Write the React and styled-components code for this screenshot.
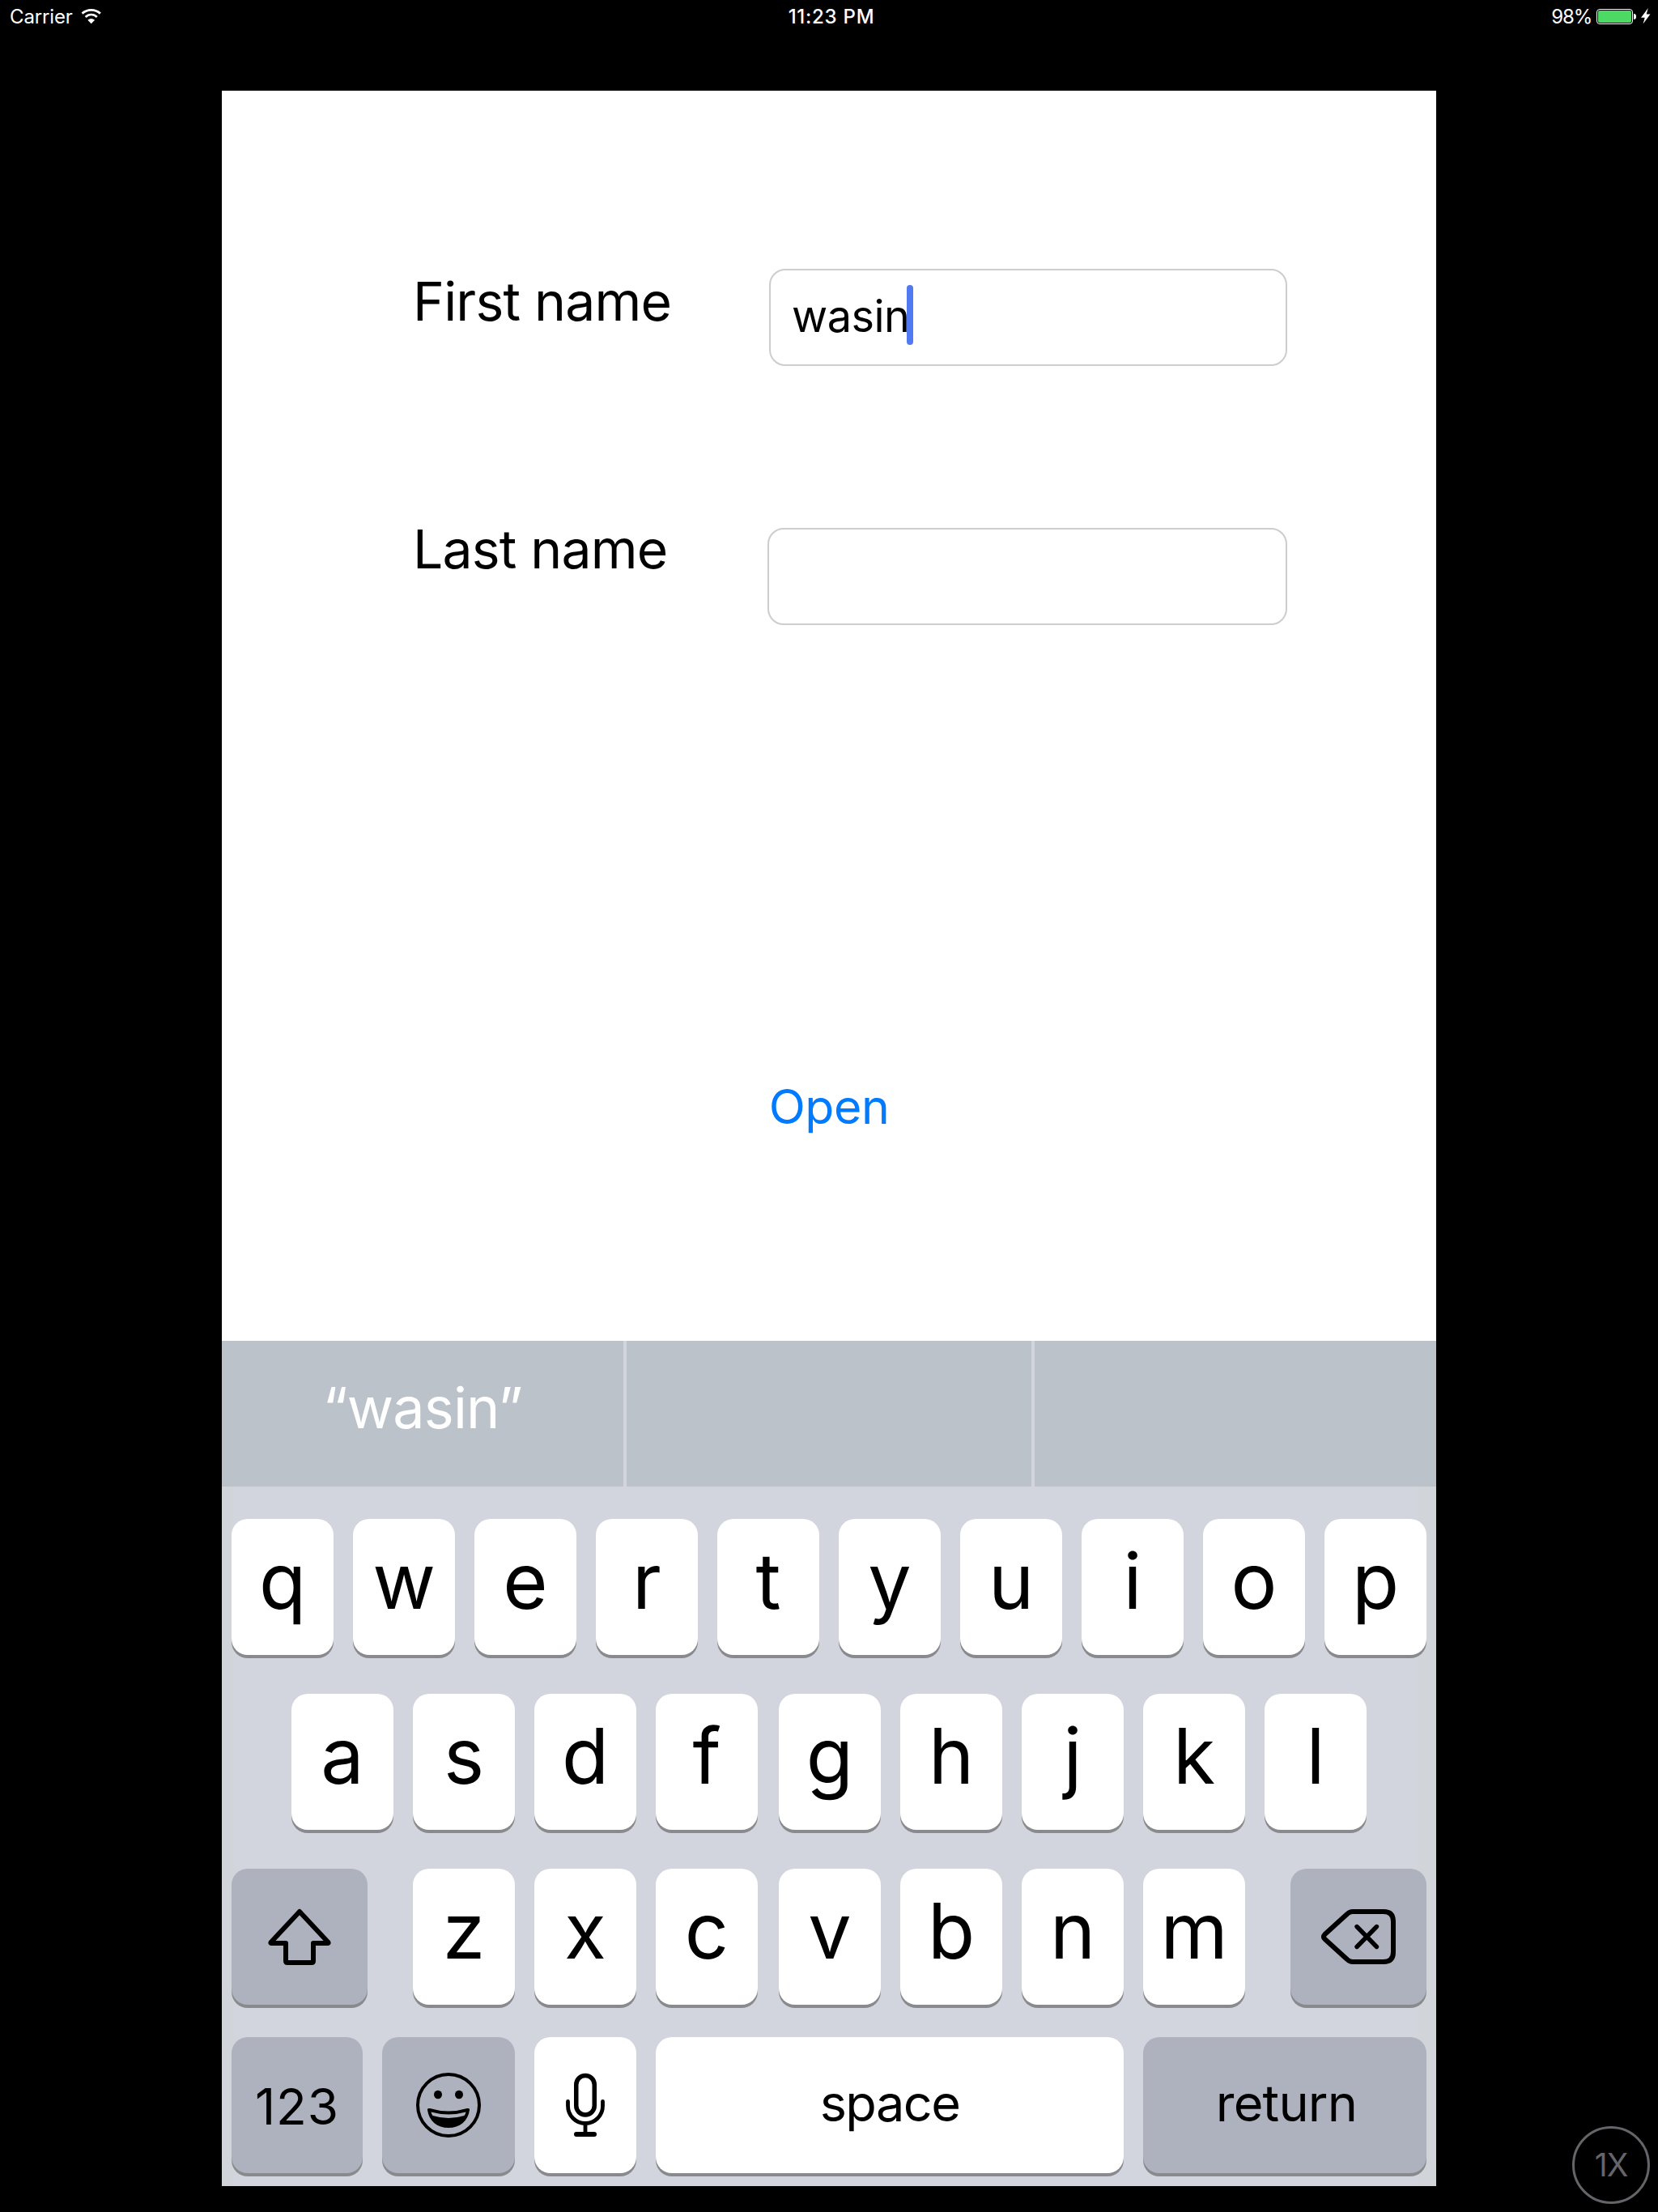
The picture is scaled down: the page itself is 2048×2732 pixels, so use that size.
import React from 'react';
import styled, { createGlobalStyle } from 'styled-components';

const GlobalStyle = createGlobalStyle`
  *, *::before, *::after { box-sizing: border-box; }
  html, body { margin: 0; padding: 0; background: #000; }
  body { font-family: Inter, Roboto, "Liberation Sans", sans-serif; }
`;

const Screen = styled.main`
  position: relative;
  display: flex;
  flex-direction: column;
  align-items: center;
  width: 2048px;
  height: 2732px;
  background: #000;
  overflow: hidden;
`;

const StatusBar = styled.header`
  display: grid;
  grid-template-columns: 1fr auto 1fr;
  align-items: start;
  width: 100%;
  height: 112px;
  padding: 0 9px 0 12px;
  color: #fff;
  font-size: 24px;
  line-height: 41px;
  white-space: nowrap;
`;

const StatusGroup = styled.div`
  display: flex;
  align-items: flex-start;
  justify-content: ${(p) => (p.$end ? 'flex-end' : 'flex-start')};
`;

const StatusText = styled.span`
  letter-spacing: ${(p) => p.$track || 0}px;
`;

const Clock = styled.time`
  padding-left: 3px;
  font-weight: 500;
  letter-spacing: 0.75px;
`;

const Wifi = styled.svg`
  width: 26px;
  height: 20px;
  margin: 10px 0 0 10px;
`;

const Battery = styled.div`
  width: 45px;
  height: 19px;
  margin: 11px 0 0 6px;
  padding: 1px;
  border: 1px solid #fff;
  border-radius: 4px;
`;

const Charge = styled.div`
  height: 100%;
  border-radius: 2px;
  background: #4cd964;
`;

const BatteryTip = styled.div`
  width: 3px;
  height: 7px;
  margin: 17px 0 0 1px;
  border-radius: 0 3px 3px 0;
  background: #fff;
`;

const Bolt = styled.svg`
  width: 12px;
  height: 20px;
  margin: 10px 0 0 6px;
`;

const Phone = styled.section`
  display: flex;
  flex-direction: column;
  width: 1500px;
  height: 2588px;
  background: #fff;
`;

const Form = styled.div`
  display: flex;
  flex-direction: column;
  height: 1544px;
  padding-top: 220px;
`;

const Field = styled.div`
  display: flex;
  justify-content: space-between;
  align-items: flex-start;
  height: 120px;
  margin-bottom: ${(p) => p.$after}px;
  padding: 0 184px 0 236px;
`;

const Label = styled.label`
  font-size: 66px;
  line-height: ${(p) => p.$line}px;
  letter-spacing: -0.8px;
  white-space: nowrap;
  color: #000;
`;

const TextBox = styled.div`
  display: flex;
  align-items: flex-start;
  width: ${(p) => p.$width}px;
  height: 120px;
  padding: 18px 0 0 26px;
  border: 2px solid #cdcdcd;
  border-radius: 20px;
  background: #fff;
  font-size: 54px;
  line-height: 77px;
  color: #000;
`;

const Typed = styled.span`
  letter-spacing: -0.5px;
`;

const Caret = styled.span`
  width: 8px;
  height: 74px;
  margin-left: -4px;
  border-radius: 4px;
  background: #5079f2;
`;

const OpenButton = styled.button`
  align-self: center;
  padding: 0;
  border: 0;
  background: none;
  font: inherit;
  font-size: 59px;
  line-height: 69px;
  letter-spacing: -0.5px;
  color: #007aff;
`;

const Suggestions = styled.div`
  display: grid;
  grid-template-columns: 496px 500px 496px;
  gap: 4px;
  height: 180px;
  background: #d2d5dd;
`;

const Suggestion = styled.div`
  background: #bbc2ca;
  color: #fff;
  font-size: 70px;
  line-height: 165px;
  letter-spacing: -0.8px;
  text-align: center;
`;

const Keyboard = styled.div`
  display: flex;
  flex-direction: column;
  height: 864px;
  padding: 40px 12px 0;
  background: linear-gradient(to right, #d1d4d8 12px, #d2d5dd 16px, #d2d5dd 1474px, #d1d4d8 1480px);
`;

const KeyRow = styled.div`
  display: flex;
  justify-content: space-between;
  height: 168px;
  margin-bottom: ${(p) => p.$after || 0}px;
  padding: 0 ${(p) => p.$inset || 0}px;
`;

const KeyGroup = styled.div`
  display: flex;
  gap: ${(p) => p.$gap || 24}px;
`;

const Key = styled.button`
  display: flex;
  justify-content: center;
  align-items: ${(p) => (p.$icon ? 'center' : 'flex-start')};
  flex: none;
  width: ${(p) => p.$width || 126}px;
  height: 168px;
  padding: 0 0 0 ${(p) => p.$nudge || 0}px;
  border: 0;
  border-radius: 20px;
  background: ${(p) => (p.$dark ? '#aeb2be' : '#fff')};
  box-shadow: 0 4px 0 #898a8d;
  font: inherit;
  font-size: ${(p) => p.$size || 95}px;
  line-height: ${(p) => p.$line || 153}px;
  letter-spacing: ${(p) => p.$track || 0}px;
  color: #000;
`;

const Glyph = styled.svg`
  display: block;
  width: ${(p) => p.$w}px;
  height: ${(p) => p.$h}px;
  fill: none;
  stroke: #000;
  stroke-linecap: round;
  stroke-linejoin: round;
`;

const ZoomBadge = styled.div`
  position: absolute;
  right: 10px;
  bottom: 10px;
  width: 96px;
  height: 96px;
  border: 3px solid #656569;
  border-radius: 50%;
  color: #656569;
  font-size: 39px;
  letter-spacing: -1px;
  line-height: 90px;
  text-align: center;
`;

const Letters = ({ of }) => (
  <KeyGroup>
    {[...of].map((c) => <Key key={c}>{c}</Key>)}
  </KeyGroup>
);

const ShiftIcon = () => (
  <Glyph $w={80} $h={72} viewBox="330 2355 80 72" strokeWidth="6">
    <path d="M370 2360 L334.5 2398 Q334 2399 335 2399 H353 V2421 Q353 2423 355 2423 H385 Q387 2423 387 2421 V2399 H405 Q406 2399 405.5 2398 Z" />
  </Glyph>
);

const DeleteIcon = () => (
  <Glyph $w={92} $h={68} viewBox="1632 2358 92 68" strokeWidth="6">
    <path d="M1671 2361 H1709 Q1721 2361 1721 2373 V2411 Q1721 2423 1709 2423 H1671 Q1667 2423 1664 2420 L1636.500 2395 Q1633.500 2392 1636.500 2389 L1664 2364 Q1667 2361 1671 2361 Z" />
    <path strokeWidth="5.4" d="M1676 2379.500 L1700.500 2404.500 M1700.500 2379.500 L1676 2404.500" />
  </Glyph>
);

const EmojiIcon = () => (
  <Glyph $w={80} $h={80} viewBox="514 2560 80 80" strokeWidth="4">
    <circle cx="554" cy="2600" r="38" />
    <g stroke="none">
      <ellipse cx="541" cy="2587" rx="5" ry="5.3" fill="#000" />
      <ellipse cx="567" cy="2587" rx="5" ry="5.3" fill="#000" />
      <path fill="#000" d="M528 2606 Q527.500 2603.500 531 2604 Q554 2611 577 2604 Q580.500 2603.500 580 2606 C578 2620 568 2628 554 2628 C540 2628 530 2620 528 2606 Z" />
      <path fill="#aeb2be" d="M532.500 2608.500 Q554 2614.500 575.500 2608.500 Q575 2611 573.500 2613 Q554 2619 534.500 2613 Q533 2611 532.500 2608.500 Z" />
    </g>
  </Glyph>
);

const MicIcon = () => (
  <Glyph $w={50} $h={80} viewBox="699 2561 50 80" strokeWidth="5.5">
    <rect x="712.75" y="2564.5" width="22.5" height="48.5" rx="11.25" />
    <path strokeWidth="4.8" d="M702.500 2596.500 V2602 A21.500 21.500 0 0 0 745.500 2602 V2596.500 M724 2624 V2637" />
    <path strokeWidth="6" d="M713 2637 H735" />
  </Glyph>
);

export default function App() {
  return (
    <Screen>
      <GlobalStyle />
      <StatusBar>
        <StatusGroup>
          <StatusText $track={-0.15}>Carrier</StatusText>
          <Wifi viewBox="100 10 26 20" fill="none" stroke="#fff">
            <path strokeWidth="2.8" d="M101.500 16.600 A17 17 0 0 1 123.900 16.600" />
            <path strokeWidth="2.6" d="M105.600 21 A10 10 0 0 1 119.800 21" />
            <path fill="#fff" stroke="none" d="M108.300 24.800 Q112.700 21 117.100 24.800 L112.700 29.200 Z" />
          </Wifi>
        </StatusGroup>
        <Clock>11:23 PM</Clock>
        <StatusGroup $end>
          <StatusText $track={-1.2}>98%</StatusText>
          <Battery>
            <Charge />
          </Battery>
          <BatteryTip />
          <Bolt viewBox="0 0 12 20" fill="#fff">
            <path d="M8.800 0 L0 11.700 H4.700 L2.600 19.500 L11.500 7.500 H6.700 Z" />
          </Bolt>
        </StatusGroup>
      </StatusBar>

      <Phone>
        <Form>
          <Field $after={200}>
            <Label $line={80}>First name</Label>
            <TextBox $width={640}>
              <Typed>wasin</Typed>
              <Caret />
            </TextBox>
          </Field>
          <Field $after={560}>
            <Label $line={52}>Last name</Label>
            <TextBox $width={642} />
          </Field>
          <OpenButton>Open</OpenButton>
        </Form>

        <Suggestions>
          <Suggestion>“wasin”</Suggestion>
          <Suggestion />
          <Suggestion />
        </Suggestions>

        <Keyboard>
          <KeyRow $after={48}>
            <Letters of="qwertyuiop" />
          </KeyRow>
          <KeyRow $after={48} $inset={74}>
            <Letters of="asdf" />
            <Letters of="ghjkl" />
          </KeyRow>
          <KeyRow $after={40}>
            <Key $dark $icon $width={168} aria-label="shift"><ShiftIcon /></Key>
            <KeyGroup $gap={26}>
              <Letters of="zxc" />
              <Letters of="vbnm" />
            </KeyGroup>
            <Key $dark $icon $width={168} aria-label="delete"><DeleteIcon /></Key>
          </KeyRow>
          <KeyRow>
            <Key $dark $width={162} $size={62} $line={171} $track={0.9}>123</Key>
            <Key $dark $icon $width={164} aria-label="emoji"><EmojiIcon /></Key>
            <Key $icon aria-label="dictate"><MicIcon /></Key>
            <Key $width={578} $size={63} $line={162} $track={-1.6}>space</Key>
            <Key $dark $width={350} $size={63} $line={162} $track={-0.8} $nudge={4}>return</Key>
          </KeyRow>
        </Keyboard>
      </Phone>

      <ZoomBadge>1X</ZoomBadge>
    </Screen>
  );
}
